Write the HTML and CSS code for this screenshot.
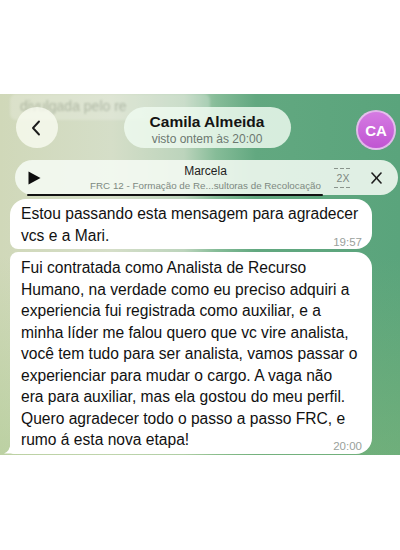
FILE: index.html
```html
<!DOCTYPE html>
<html lang="pt-BR">
<head>
    <meta charset="UTF-8">
    <meta name="viewport" content="width=device-width, initial-scale=1.0">
    <title>Camila Almeida</title>
    <link rel="stylesheet" href="styles.css">
</head>
<body>

    <div class="screen">
        <!-- mensagem fixada, borrada atrás do cabeçalho -->
        <div class="pinned">divulgada pelo re</div>

        <div class="header">
            <button class="back" aria-label="Voltar">
                <svg width="10" height="16" viewBox="0 0 10 16">
                    <polyline points="8,1.5 2,8 8,14.5" fill="none" stroke="#1b1b1b" stroke-width="1.9" stroke-linecap="round" stroke-linejoin="round"/>
                </svg>
            </button>
            <div class="title">
                <div class="name">Camila Almeida</div>
                <div class="status">visto ontem às 20:00</div>
            </div>
            <div class="avatar">CA</div>
        </div>

        <div class="player">
            <svg class="play" width="13" height="14" viewBox="0 0 13 14">
                <polygon points="0.5,0.5 12.5,7 0.5,13.5" fill="#0d0d0d"/>
            </svg>
            <div class="track">
                <div class="author">Marcela</div>
                <div class="episode">FRC 12 - Formação de Re...sultoras de Recolocação</div>
            </div>
            <div class="speed">
                <svg width="18" height="3" viewBox="0 0 18 3"><line x1="0" y1="1.5" x2="18" y2="1.5" stroke="#8a948c" stroke-width="1" stroke-dasharray="4 2"/></svg>
                <span>2X</span>
                <svg width="18" height="3" viewBox="0 0 18 3"><line x1="0" y1="1.5" x2="18" y2="1.5" stroke="#8a948c" stroke-width="1" stroke-dasharray="4 2"/></svg>
            </div>
            <svg class="close" width="11" height="12" viewBox="0 0 11 12">
                <line x1="1" y1="1" x2="10" y2="11" stroke="#1d1d1d" stroke-width="1.6" stroke-linecap="round"/>
                <line x1="10" y1="1" x2="1" y2="11" stroke="#1d1d1d" stroke-width="1.6" stroke-linecap="round"/>
            </svg>
        </div>

        <div class="messages">
            <div class="bubble first">
                <p>Estou passando esta mensagem para agradecer<br>vcs e a Mari.<span class="time">19:57</span></p>
            </div>
            <div class="bubble last">
                <p>Fui contratada como Analista de Recurso<br>Humano, na verdade como eu preciso adquiri a<br>experiencia fui registrada como auxiliar, e a<br>minha líder me falou quero que vc vire analista,<br>você tem tudo para ser analista, vamos passar o<br>experienciar para mudar o cargo. A vaga não<br>era para auxiliar, mas ela gostou do meu perfil.<br>Quero agradecer todo o passo a passo FRC, e<br>rumo á esta nova etapa!<span class="time">20:00</span></p>
            </div>
        </div>
    </div>

</body>
</html>
```

FILE: styles.css
```css
body {
    margin: 0;
    background-color: #fff;
    font-family: "Liberation Sans", Arial, sans-serif;
}

.screen {
    position: relative;
    margin-top: 94px;
    width: 400px;
    height: 361px;
    overflow: hidden;
    background:
        linear-gradient(180deg, rgba(255, 255, 255, 0) 45%, rgba(150, 195, 120, 0.35) 100%),
        linear-gradient(90deg, #d0d8b9 0%, #d5dec8 28%, #bcd4bc 46%, #86bc98 54%, #62a880 64%, #5aa47c 100%);
}

/* texto fixado borrado atrás do cabeçalho */
.pinned {
    position: absolute;
    top: 0;
    left: 10px;
    width: 190px;
    height: 26px;
    padding-left: 10px;
    line-height: 24px;
    font-size: 14px;
    color: rgba(120, 130, 110, 0.45);
    background-color: rgba(255, 255, 255, 0.22);
    border-radius: 6px;
    filter: blur(1.3px);
}

.header {
    position: relative;
    display: flex;
    justify-content: space-between;
    align-items: flex-start;
    padding: 13px 4px 0 16px;
}

.back {
    width: 42px;
    height: 41px;
    border: none;
    border-radius: 50%;
    background-color: rgba(250, 252, 242, 0.78);
    display: flex;
    align-items: center;
    justify-content: center;
    padding: 0 3px 0 0;
}

.title {
    width: 167px;
    height: 41px;
    border-radius: 21px;
    background-color: rgba(238, 250, 240, 0.84);
    text-align: center;
}

.name {
    font-size: 15.5px;
    font-weight: bold;
    color: #141414;
    padding-top: 6px;
    line-height: 18px;
}

.status {
    font-size: 12px;
    color: #6c7870;
    line-height: 14px;
    margin-top: 1px;
}

.avatar {
    width: 36px;
    height: 36px;
    margin-top: 3px;
    border-radius: 50%;
    border: 2px solid rgba(235, 215, 240, 0.75);
    background: linear-gradient(180deg, #d57be2, #c054d2);
    color: #fff;
    font-weight: bold;
    font-size: 15px;
    display: flex;
    align-items: center;
    justify-content: center;
}

.player {
    position: relative;
    display: flex;
    align-items: center;
    height: 35px;
    margin: 10px 2px 0 15px;
    padding: 0 16px 0 13px;
    border-radius: 18px;
    background-color: rgba(246, 251, 244, 0.86);
}

/* barra de progresso do áudio */
.player::after {
    content: "";
    position: absolute;
    left: 12px;
    width: 296px;
    bottom: -1px;
    height: 2px;
    background-color: #121212;
    border-radius: 1px;
}

.play {
    flex-shrink: 0;
}

.track {
    flex: 1;
    margin: 0 8px 0 44px;
    text-align: center;
    white-space: nowrap;
}

.author {
    font-size: 12px;
    color: #222;
    line-height: 14px;
}

.episode {
    font-size: 9.8px;
    color: #7d8981;
    line-height: 12px;
    margin-top: 2px;
}

.speed {
    display: flex;
    flex-direction: column;
    align-items: center;
    width: 18px;
    font-size: 10.5px;
    color: #7d8781;
    line-height: 12px;
    margin-right: 19px;
}

.speed span {
    margin: 2px 0;
}

.messages {
    display: flex;
    flex-direction: column;
    gap: 3px;
    margin: 4px 0 0 10px;
    width: 362px;
}

.bubble {
    position: relative;
    background-color: #fff;
    border-radius: 16px;
    padding: 4px 8px 3px 11px;
}

.bubble.first {
    border-bottom-left-radius: 8px;
}

.bubble.last {
    padding-top: 5px;
    border-top-left-radius: 8px;
    border-bottom-left-radius: 4px;
}

/* rabinho do balão */
.bubble.last::before {
    content: "";
    position: absolute;
    left: -6px;
    bottom: 0;
    width: 14px;
    height: 14px;
    background-color: #fff;
    clip-path: path("M 0 14 Q 6 12 7 2 L 14 0 L 14 14 Z");
}

.bubble p {
    margin: 0;
    font-size: 15.6px;
    line-height: 21.5px;
    color: #111;
    white-space: nowrap;
}

.time {
    float: right;
    font-size: 11.5px;
    line-height: 14px;
    color: #9aa19c;
    margin: 10px 2px -10px 8px;
}
```
